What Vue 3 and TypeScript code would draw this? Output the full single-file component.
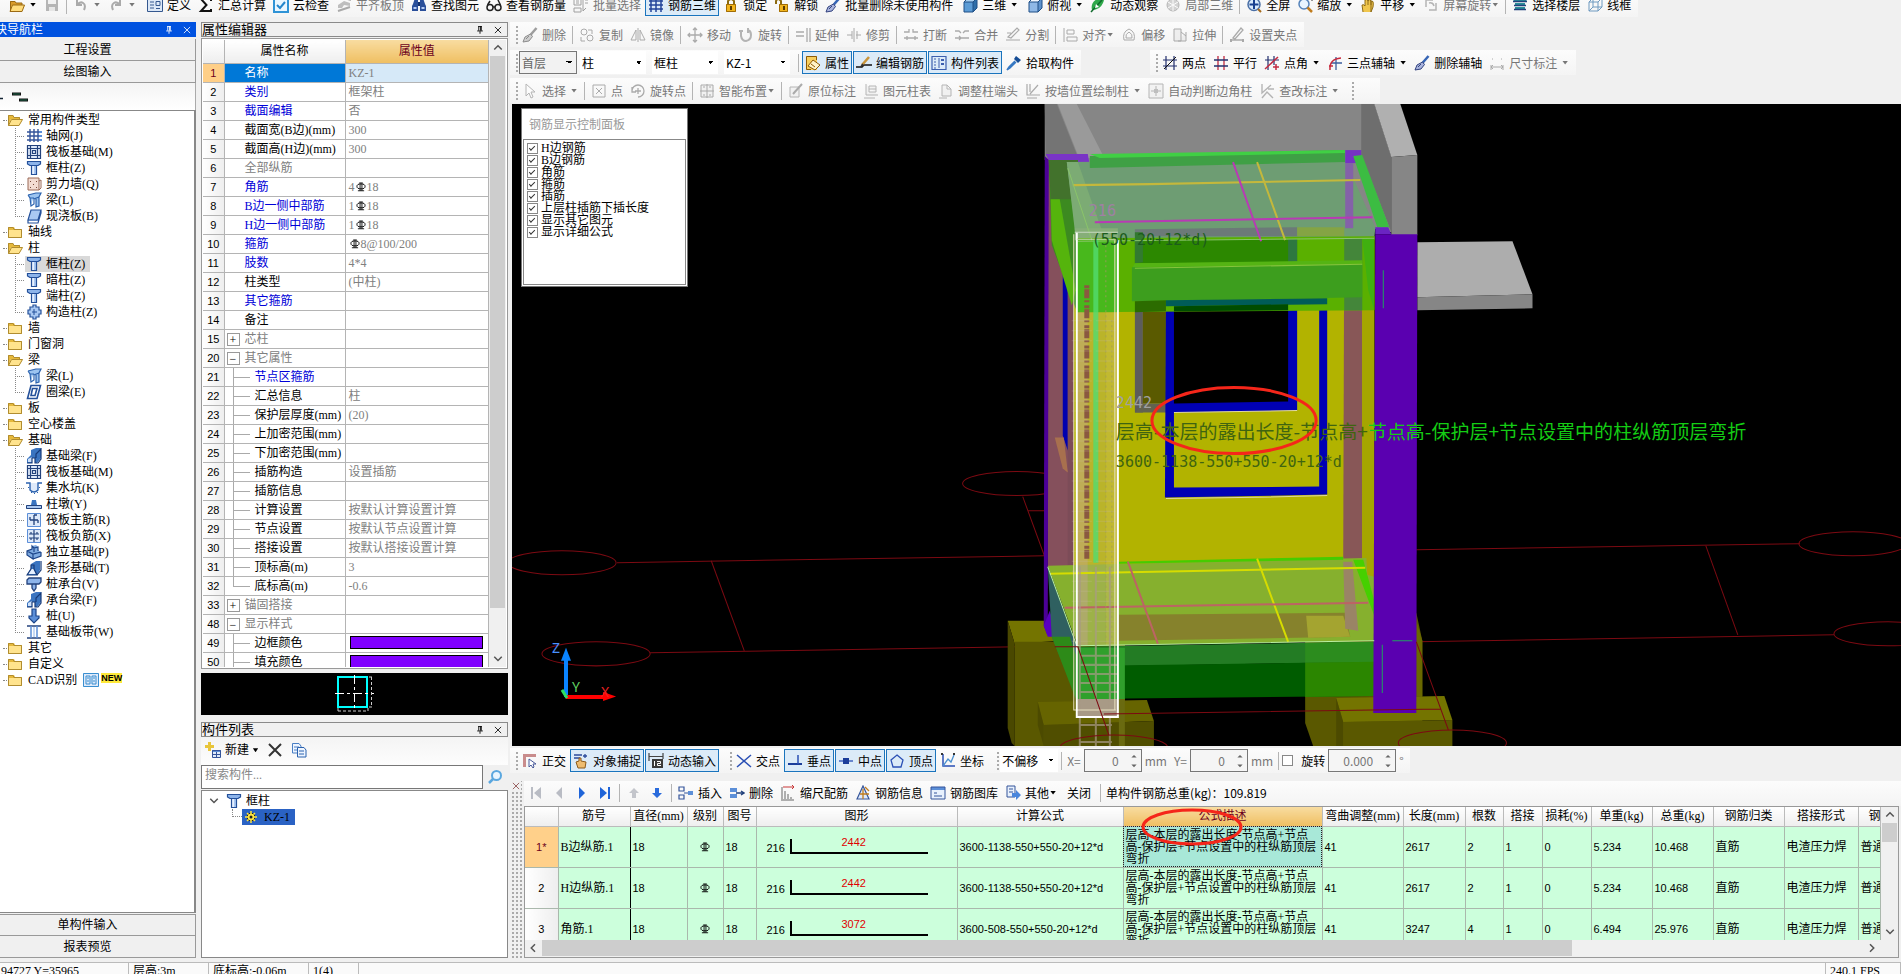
<script setup lang="ts">
import { h, ref, type FunctionalComponent, type VNode } from 'vue'

/* ---------- icons (16 x 16) ---------- */
const p = (d: string, stroke = '#2f5fa8', w = 1, fill = 'none') =>
  `<path d="${d}" stroke="${stroke}" stroke-width="${w}" fill="${fill}"/>`
const f = (d: string, fill: string) => `<path d="${d}" fill="${fill}"/>`
const brush = (c: string) =>
  p('M14.5 1L8 8.5', c, 2.5) + f('M8.5 7L3 10L1 15L7 14L10.5 9.5Z', '#a9b4dd') + p('M8.5 7L3 10L1 15L7 14L10.5 9.5ZM4 12L7 9', '#33437f')
const cube = (a: string, b: string, c: string) =>
  f('M2 5H11V15H2Z', a) + f('M2 5L6 1H15L11 5Z', b) + f('M11 5L15 1V11L11 15Z', c) + p('M2 5H11V15H2ZM2 5L6 1H15L11 5M15 1V11L11 15', '#1f4f86')
const icons: Record<string, string> = {
  open: f('M1 4H6L7 6H13V14H1Z', '#d99b2b') + f('M3 8H16L13 15H1Z', '#ffdc7d') + p('M1.5 14V4.5H6L7 6H13V8M3.5 8H15.5L13 14.5H1Z', '#9b6a14'),
  save: f('M2 2H14V14H2Z', '#8a8a8a') + f('M4 2H12V7H4Z', '#eee') + f('M5 10H11V14H5Z', '#ddd'),
  undo: p('M4 3V8H9M4 8C8 3 14 6 11 13', '#777', 2),
  redo: p('M12 3V8H7M12 8C8 3 2 6 5 13', '#777', 2),
  define: f('M1 2H15V14H1Z', '#dce8f7') + p('M.5 1.5H15.5V14.5H.5ZM3 5H7M3 8H7M3 11H7M9 4.500H13V8.500H9ZM9 11.500H13', '#35588f'),
  sigma: p('M13 4V2H3L8.500 8L3 14H13V12', '#111', 2),
  cloud: f('M0 0H16V16H0Z', '#2f93d6') + f('M2 2H14V14H2Z', '#e9f6ff') + p('M4 8L7 11L12 5', '#2486cc', 2),
  flush: f('M2 8L8 4L14 6V9L8 8L6 11H2Z', '#999') + p('M2 14L14 10M8 1L15 3', '#777', 2),
  find: f('M2 7L4 1H7V14H1V9ZM14 7L12 1H9V14H15V9Z', '#2a4f9a') + f('M7 5H9V9H7Z', '#14306b') + p('M2.500 11H5.500M10.500 11H13.500', '#b7cdf5', 2),
  glasses: `<circle cx="4" cy="10.500" r="3" fill="none" stroke="#222" stroke-width="1.500"/><circle cx="12" cy="10.500" r="3" fill="none" stroke="#222" stroke-width="1.500"/>` + p('M7 10H9M14.500 8L12 3M1.500 8L4 4', '#222', 1.5),
  batch: p('M1 2H8V8H1ZM3 4H6M3 6H6M1 11H8V15H1ZM10 2V14M10 14L13 11M12 3H15M12 6H15', '#666'),
  bar3d: p('M3 1V15M8 1V15M13 1V15M1 4H15M1 8H15M1 12H15', '#24469a', 1.5),
  lock: p('M5 8V4Q8 0 11 4V8', '#8b6a10', 2) + f('M3 7H13V15H3Z', '#f2b51d') + p('M3.500 7.500H12.500V14.500H3.500Z', '#a06c06') + f('M7 9H9V13H7Z', '#5b3b00'),
  unlock: p('M2 7V4Q4 0 7 4V8', '#8b6a10', 2) + f('M5 7H14V15H5Z', '#f2b51d') + p('M5.500 7.500H13.500V14.500H5.500Z', '#a06c06') + f('M9 9H11V13H9Z', '#5b3b00'),
  brush: brush('#3665b5'),
  cube: cube('#5b9bd5', '#a9d0f0', '#2f6ea8'),
  cube2: cube('#8fb8e6', '#f2f8ff', '#5e92cc'),
  orbit: f('M2 13Q0 5 9 1Q16 0 13 6Q10 13 2 13Z', '#2fa84a') + p('M1 15L12 3', '#0f6a2c', 1.5) + f('M6 7L9 10L5 11Z', '#fff'),
  local: `<circle cx="8" cy="8" r="6" fill="#bbb" stroke="#888"/>` + p('M3 5L13 11M3 11L13 5M8 2V14', '#fff'),
  full: `<circle cx="8" cy="7.500" r="6" fill="#d8eafc" stroke="#4a6fa5" stroke-width="1.500"/>` + p('M8 3V12M3.500 7.500H12.500', '#173f8f', 2) + p('M12 12L15 15', '#a56a1c', 2),
  zoom: `<circle cx="7" cy="7" r="5" fill="#e8f4ff" stroke="#5583ba" stroke-width="1.500"/>` + p('M10.500 10.500L15 15', '#c07c1e', 2.5) + p('M12 1H15V4', '#333'),
  pan: f('M3 15L2 8Q4 7 5 9L5 3Q7 1 8 4L9 2Q11 1 11 4L13 4Q14 6 13 10L11 15Z', '#f0c64d') + p('M3 15L2 8Q4 7 5 9L5 3Q7 1 8 4V8M8 4Q10 1 11 4V8M11 4Q14 3 13 10L11 15Z', '#8d6a18'),
  rot: p('M3 3H10M3 3V10M13 6V13H6M6 6Q10 5 11 9', '#888', 1.5),
  floors: f('M3 2L13 2L15 4H1ZM3 6H13V8H3ZM3 10H13V12H3Z', '#2a8f9a') + p('M1 4.500H15M2 8.500H14M2 12.500H14M3 1.500H13', '#23427c', 1.5),
  wire: p('M2 5H11V14H2ZM2 5L6 1H15V10L11 14M11 5L15 1M6 1V10H15M6 10L2 14', '#6f9ac0'),
  copy: `<circle cx="5" cy="5" r="3" fill="none" stroke="#777"/><circle cx="11" cy="11" r="3" fill="none" stroke="#777"/>` + p('M9 3H13V7M2 10V14H6', '#777'),
  mirror: p('M8 1V15M6 3V13H1ZM10 3V13H15Z', '#777'),
  move: p('M8 1V15M1 8H15M6 3L8 1L10 3M6 13L8 15L10 13M3 6L1 8L3 10M13 6L15 8L13 10', '#777', 1.3),
  rotate: p('M3 4V9Q4 14 8 14Q13 13 13 8Q13 4 10 3M10 1V6M1 4H5', '#888', 2),
  extend: p('M1 5H9M1 9H9M12 1V15M15 1V15', '#777', 1.3),
  trim: p('M1 8H6M10 8H15M8 1V15M6 4V12M11 4V12', '#777'),
  brk: p('M1 5H6V2M10 2V5H15M1 11H15M4 9V13M12 9V13', '#777', 1.3),
  merge: p('M1 4H5L7 6M15 4H11L9 6M1 11H15M5 9L7 11L5 13', '#777', 1.3),
  split: p('M1 13H15M3 10L12 1L14 3L6 11ZM2 6H6', '#777', 1.2),
  align: p('M2 1V15M5 3H12V7H5ZM5 10H15V14H5Z', '#777'),
  offset: p('M3 13Q1 5 8 2Q15 5 13 13ZM5 11Q4 7 8 5Q12 7 11 11Z', '#777'),
  stretch: p('M2 2H9V14H2ZM9 5L14 9M14 5V14H6', '#777', 1, '#e8e8e8'),
  grips: p('M1 13H15M4 11L12 1L14 3L6 12Z', '#777', 1.3) + f('M1 12H3V15H1ZM13 12H15V15H13Z', '#777'),
  prop: f('M1 1H12V15H1Z', '#f8cf5e') + f('M8 5L15 10L10 15L3 11Z', '#fff3c8') + p('M1.500 1.500H11.500V5M1.500 1.500V14.500H6M8 5L15 10L10 15L3 11ZM6 9L10 12', '#8c5a08'),
  edit: p('M0 12H6L8 10H16', '#111', 1.5) + p('M6 10L13 2', '#c9953b', 2.5) + p('M5 12L7 9', '#333', 2),
  list: p('M1 1.500H15V14.500H1Z', '#3c5fae', 1.2) + p('M3 4H5M3 7H5M3 10H5M3 13H5M8 3V13', '#3c5fae', 1, 'none') + f('M10 4H13V6H10ZM10 8H13V10H10Z', '#3c5fae'),
  dropper: f('M10 1L15 5L12 8L8 4Z', '#174e96') + p('M9 6L3 12L1 15L4 13L10 7', '#3678c2', 1.5),
  twopt: p('M4 1V15M1 5H15M12 1V15M1 11H15', '#23306e', 1.2) + p('M2 14L14 2', '#111'),
  parallel: p('M5 1V15M11 1V15', '#c22b42', 1.3) + p('M1 5H15M1 11H15', '#23306e', 1.3),
  ptangle: p('M4 1V15M1 5H15M10 1V10', '#23306e', 1.2) + p('M1 14L14 2M9 12H15M12 9V15', '#c22b42', 1.5),
  three: p('M9 2V15M4 8H15', '#3d5d9d', 1.3) + p('M3 15Q2 4 14 3M2 11H6', '#c8283c', 1.5),
  dim: p('M2 10V15M14 10V15M2 12H14M4 10L2 12L4 14M12 10L14 12L12 14M3 4H4M12 4H13', '#777'),
  arrow: p('M4 1V13L7 10L9 15L11 14L9 9H13Z', '#888', 1, '#fff'),
  point: p('M2 2H14V14H2ZM5 5L11 11M11 5L5 11', '#777'),
  rotpt: p('M2 8A6 6 0 1 1 8 14M2 4V9H6M8 5V11M5 8H11', '#777', 1.3),
  smart: p('M2 2H14V14H2ZM8 1V15M1 8H15M4 4H6M10 4H12M4 12H6M10 12H12', '#777', 1, '#eee'),
  note: p('M2 4H11V14H2Z', '#888', 1, '#eee') + p('M5 11L14 1', '#777', 2),
  ctable: p('M3 1V12H15M6 3H13V9H6ZM6 6H13M1 15H12', '#888', 1, '#eee'),
  adjust: p('M4 2H9L13 6V13H4ZM9 2V6H13M1 15H9', '#888', 1, '#eee'),
  wall: p('M2 1V12H15M5 11L13 2M2 15H12M5 1V9', '#777', 1.2),
  auto: p('M1 1H15V15H1ZM8 3V13M3 8H13', '#888', 1, '#eee') + f('M6 6H10V10H6Z', '#999'),
  modify: p('M3 1V10L12 2M3 15L8 9L14 15M9 6H15', '#888', 1.4),
  ortho: f('M1 1H14V4H4V14H1Z', '#c98c8c') + p('M7 6V14L9 12L11 15L12 14L11 11H14Z', '#4a5a9a', 1, '#fff'),
  snap: p('M1 2H9M1 5H7M12 1V5M10 3H14', '#2c4b9a', 1.3) + f('M5 15L3 9L6 8V5H8V8L13 9L12 15Z', '#eebc70') + p('M5 15L3 9L6 8V5H8V8L13 9L12 15Z', '#8c5a1a'),
  dyn: p('M1 0V8M1 3.500H15M15 0V6', '#444', 1.2) + f('M4 6H15V15H4Z', '#3a3a3a') + p('M6.500 8V13M9 8.500H12.500V10.500H9.500V12.500H13', '#fff'),
  cross: p('M1 2L15 14M15 2L1 14', '#2b50b5', 1.5),
  perp: p('M1 11H15', '#1b3d9a', 2) + p('M11 2V11', '#2b50b5', 1.5),
  mid: p('M1 8H15', '#2b50b5', 1.3) + f('M5 5H11V11H5Z', '#1b3d9a'),
  vertex: p('M8 2L14 7L12 14H4L2 7Z', '#2b50b5', 1.3),
  coord: p('M3 1V13H15', '#2b50b5', 1.5) + p('M3 13L8 6L11 9L14 2', '#4a8fd0', 1.3) + f('M1 0H3V2H1ZM13 0H15V2H13Z', '#333'),
  first: f('M3 2H5V14H3ZM13 2V14L6 8Z', '#b9bcc4'),
  prev: f('M11 2V14L5 8Z', '#b9bcc4'),
  next: f('M5 2V14L11 8Z', '#1f64d8'),
  last: f('M11 2H13V14H11ZM3 2V14L10 8Z', '#1f64d8'),
  up: f('M8 3L13 8H10V13H6V8H3Z', '#c3c5cb'),
  down: f('M8 13L13 8H10V3H6V8H3Z', '#2a6bdc'),
  insert: p('M1 2H6V6H1ZM1 10H6V14H1ZM6 8H10', '#34549a', 1.2) + f('M10 6H15V10H10Z', '#5c8fd8'),
  delrow: f('M1 3H8V7H1ZM1 9H8V13H1Z', '#5c8fd8') + p('M7 8H15M12 6L15 8L12 10', '#23427c', 1.4),
  scale: p('M2 2V14M5 6V14M8 9V14M11 12V14M1 15H14', '#666') + p('M3 2H14M12 0L14 2L12 4', '#c83737'),
  info: p('M2 14L8 1L14 14Z', '#34549a', 1.2, '#dfeafa') + p('M5 9H14M8 4V14M10 2L14 6', '#c07c1e', 1.3),
  lib: f('M1 2H15V14H1Z', '#e8f1fd') + f('M1 2H15V5H1Z', '#5c8fd8') + p('M1 2H15V14H1ZM4 8H7M4 11H12', '#34549a'),
  other: p('M2 1H10V12H2ZM4 4H8M4 7H8', '#34549a', 1, '#e8f1fd') + f('M7 8H11V5L16 10L11 15V12H7Z', '#4a86dc'),
  folder: f('M1 3H7L8 5H15V14H1Z', '#e6b93c') + f('M2 6H15V13H2Z', '#ffe38d') + p('M1.500 13.500V3.500H6L7 5.500H14.500V13.500Z', '#b08c30'),
  folderOpen: f('M1 3H6L7 5H13V13H1Z', '#e6b93c') + f('M4 7H16L12 14H1Z', '#ffe38d') + p('M1.500 13.500V3.500H6L7 5.500H12.500V7M4.500 7.500H15.500L12 13.500H1.500Z', '#b08c30'),
  axis: p('M4 1V14M8 1V14M12 1V14M1 4H14M1 8H14M1 12H14', '#34549a', 1.4) + f('M13 3H16V5H13ZM13 7H16V9H13ZM13 11H16V13H13Z', '#5c8fd8'),
  raft: f('M1 1H15V15H1Z', '#dfeafa') + p('M1.500 1.500H14.500V14.500H1.500ZM4.500 1V15M11.500 1V15M1 4.500H15M1 11.500H15M6.500 6.500H9.500V9.500H6.500Z', '#23427c', 1.2),
  column: f('M1 1H15V4L12 6H4L1 4Z', '#8db4ea') + f('M5 6H11V15H5Z', '#e6f0ff') + f('M8 6H11V15H8Z', '#a9c8f2') + p('M1.500 1.500H14.500V4L12 5.500H4L1.500 4ZM5.500 6V14.500H10.500V6', '#24509a', 1.2),
  shear: f('M2 2H13V14H2Z', '#f3dcd2') + p('M2 2H13V14H2ZM13 5L15 4V12L13 14', '#9a6a58') + f('M4 5H5V6H4ZM7 8H8V9H7ZM10 5H11V6H10ZM4 11H5V12H4ZM10 11H11V12H10Z', '#7a4a3a'),
  beam: f('M2 3L10 1H15L13 5V14L10 15V7H7L5 13L4 6Z', '#9cc4f0') + p('M2 3L10 1H15L13 5V14L10 15V7M2 3L4 6L5 14L8 12V7L13 5M4 6L8 6', '#2b62ae', 1.2),
  slab: f('M5 2H15L12 13H2Z', '#a9c8f2') + p('M5 2H15L12 12H2ZM2 12V15H12L15 5V2', '#24509a', 1.2),
  scol: f('M4 3H7V1H10V3H13V6H15V10H13V13H10V15H7V13H4V10H2V6H4Z', '#a9c8f2') + p('M4 3H7V1H10V3H13V6H15V10H13V13H10V15H7V13H4V10H2V6H4Z', '#24509a', 1.2) + p('M8 5V11M6 8H11', '#24509a'),
  ring: p('M5 1.500H14.500L11 14.500H1.500ZM6.500 4.500H11L9 11.500H5Z', '#24509a', 1.6),
  fbeam: f('M1 15V11L5 7V2L10 0H15V10L11 15H9V10H6V15Z', '#3a74c0') + f('M2 14V11L6 9V14Z', '#cfe2fb') + p('M1 15H6V10H9V15H12L15 11V1L10 6V10', '#173a78', 1.2),
  pit: p('M0 3H4V10Q8 14 12 10V3H16', '#2b62ae', 1.4, '#dfeafa') + f('M5 12H6V13H5ZM8 13H9V14H8ZM11 12H12V13H11ZM2 7H3V8H2ZM13 7H14V8H13Z', '#2b62ae'),
  pier: f('M5 9L6 4H10L11 9Z', '#3a74c0') + f('M0 9H16V13H0Z', '#a9c8f2') + p('M.5 9.500H15.500V12.500H.5Z', '#23427c'),
  mbar: f('M1 1H15V15H1Z', '#dfeafa') + p('M1.500 1.500H14.500V14.500H1.500Z', '#5c8fd8') + p('M8 3V13M4 8H12M4 5V8M12 8V11M8 3H11', '#23427c', 1.3),
  nbar: f('M1 1H15V15H1Z', '#dfeafa') + p('M1.500 1.500H14.500V14.500H1.500Z', '#5c8fd8') + p('M8 2V14M3 6H13M3 10H13M5 4V6M11 4V6M5 10V12M11 10V12', '#23427c', 1.2),
  iso: f('M1 7L6 5V2L10 1L12 3V6L15 8V12L7 15L1 11Z', '#7fabe0') + p('M1 7L7 10L15 8M7 10V15L1 11V7L6 5V2L8 4L12 3V7M15 8V12L7 15M8 4V8', '#1d4589', 1.2),
  strip: f('M1 15L5 8V4L10 1H14V10L11 15Z', '#3a74c0') + f('M2 14L5 9H8L10 14Z', '#e6f0ff') + p('M1 15H11L8 9V5H5V9ZM11 15L15 10V1', '#173a78', 1.2),
  cap: f('M1 3H15V8H1Z', '#cfe2fb') + p('M1 4L3 2H15V6L13 8H1ZM6 8V12L8 15L10 12V8', '#23427c', 1.3, '#8db4ea'),
  pile: f('M6 1H10V8H13V10L8 15L3 10V8H6Z', '#5c8fd8') + p('M6 1H10V8H13V10L8 15L3 10V8H6Z', '#1d4589', 1.2),
  band: p('M1 2H15M1 14H15', '#23427c', 1.4) + p('M5 2V14M11 2V14', '#5c8fd8', 1.5) + p('M8 3V13', '#8db4ea'),
  cad: f('M0 1H16V15H0Z', '#dfeafa') + p('M.5 1.500H15.500V14.500H.5ZM3 4H7V12H3ZM9 4H13V12H9ZM4 6H6M4 9H6M10 6H12M10 9H12', '#3a8fd0'),
  newItem: f('M3 0H6V3H9V6H6V9H3V6H0V3H3Z', '#e8c53a') + f('M7 8H16V16H7Z', '#dfeafa') + f('M7 8H16V10H7Z', '#5c8fd8') + p('M7.500 8.500H15.500V15.500H7.500ZM8 12.500H15M11.500 10V15', '#34549a'),
  del: p('M2 2L14 14M14 2L2 14', '#333', 2),
  copyDoc: p('M1.500 1.500H8L10 4V11H1.500ZM3 5H8M3 8H8', '#4a7fc4', 1, '#eef5ff') + p('M6.500 5.500H13L15 8V15H6.500ZM8 9H13M8 12H13', '#2b62ae', 1, '#eef5ff'),
  search: `<circle cx="9.500" cy="6.500" r="4.500" fill="#e8f5ff" stroke="#5aa7df" stroke-width="2"/>` + p('M6 10L2 14', '#5aa7df', 2.5),
  gear: `<circle cx="8" cy="8" r="4" fill="#ffe640" stroke="#222"/><circle cx="8" cy="8" r="1.500" fill="#222"/>` + p('M8 2V5M8 11V14M2 8H5M11 8H14M4 4L5.500 5.500M10.500 10.500L12 12M12 4L10.500 5.500M4 12L5.500 10.500', '#ffe640', 1.5),
  pin: p('M5 2.500H11M6 2V9M10 2V9M9 2V9M3.500 9.500H12.500M8 10V14', 'currentColor', 1.4),
  close: p('M3 3L13 13M13 3L3 13', 'currentColor', 1.3),
  expandAll: f('M0 9H4V11H0Z', '#123'),
  collapseAll: p('M0 5H9M7 11H16', '#111', 3) + p('M1 5H8M8 11H15', '#1d6b4c', 1),
  up2: p('M3 10L8 5L13 10', '#555', 2),
  down2: p('M3 5L8 10L13 5', '#555', 2),
  left2: p('M10 3L5 8L10 13', '#555', 2),
  right2: p('M6 3L11 8L6 13', '#555', 2),
  rebar: `<ellipse cx="8" cy="7" rx="6.500" ry="4" fill="none" stroke="#000" stroke-width="1.500"/>` + p('M6.500 0V14M9.500 0V14M3 14H13', '#000', 1.4),
  spin: f('M5 4L8 1L11 4ZM5 12L8 15L11 12Z', '#666'),
}
const Icon: FunctionalComponent<{ n: string }> = (props) =>
  h('svg', { class: 'ic', viewBox: '0 0 16 16', 'aria-hidden': 'true', innerHTML: icons[props.n] })
Icon.props = ['n']

/* ---------- toolbars ---------- */
interface Item {
  k?: 'btn' | 'sep' | 'grip' | 'combo' | 'label' | 'spin' | 'check' | 'gap'
  i?: string
  t?: string
  drop?: 'far' | 'near'
  off?: boolean
  on?: boolean
  w?: number
}
const b = (i: string, t = '', x: Partial<Item> = {}): Item => ({ i, t, ...x })
const d = (i: string, t = '', x: Partial<Item> = {}): Item => ({ i, t, off: true, ...x })
const sep: Item = { k: 'sep' }
const grip: Item = { k: 'grip' }
const gap = (w: number): Item => ({ k: 'gap', w })

const drawItem = (it: Item): VNode => {
  const w = it.w ? { width: it.w + 'px' } : undefined
  switch (it.k) {
    case 'sep': return h('span', { class: 'sep' })
    case 'grip': return h('span', { class: 'grip' })
    case 'gap': return h('span', { style: w })
    case 'label': return h('span', { class: ['lbl', { off: it.off }] }, it.t)
    case 'combo': return h('select', { class: ['combo', { boxed: it.off }], disabled: it.off, style: w, 'aria-label': it.t }, [h('option', it.t)])
    case 'check': return h('label', { class: 'tick' }, [h('input', { type: 'checkbox' }), it.t])
    case 'spin': return h('span', { class: 'spin', style: w }, [h('input', { value: it.t, 'aria-label': it.i, disabled: true }), h(Icon, { n: 'spin' })])
  }
  return h('button', { type: 'button', class: ['btn', { off: it.off, on: it.on }], 'aria-label': it.t || it.i }, [
    it.i ? h(Icon, { n: it.i }) : null,
    it.t ? h('span', it.t) : null,
    it.drop ? h('i', { class: ['caret', it.drop] }) : null,
  ])
}
const Bar: FunctionalComponent<{ items: Item[] }> = (props) => h('div', { class: 'bar', role: 'toolbar' }, props.items.map(drawItem))
Bar.props = ['items']

const mainBar: Item[] = [
  b('open', '', { drop: 'far' }), d('save'), sep, d('undo', '', { drop: 'far' }), d('redo', '', { drop: 'far' }), gap(3),
  b('define', '定义'), b('sigma', '汇总计算'), b('cloud', '云检查'), d('flush', '平齐板顶'), b('find', '查找图元'), b('glasses', '查看钢筋量'),
  d('batch', '批量选择'), b('bar3d', '钢筋三维', { on: true }), b('lock', '锁定'), b('unlock', '解锁'), b('brush', '批量删除未使用构件'), gap(1),
  b('cube', '三维', { drop: 'far' }), gap(1), b('cube2', '俯视', { drop: 'far' }), b('orbit', '动态观察'), d('local', '局部三维'), sep,
  b('full', '全屏'), b('zoom', '缩放', { drop: 'far' }), b('pan', '平移', { drop: 'far' }), d('rot', '屏幕旋转', { drop: 'near' }), sep,
  b('floors', '选择楼层'), b('wire', '线框'),
]
const editBar: Item[] = [
  grip, d('brush', '删除'), sep, d('copy', '复制'), d('mirror', '镜像'), sep, d('move', '移动'), d('rotate', '旋转'), sep,
  d('extend', '延伸'), d('trim', '修剪'), sep, d('brk', '打断'), d('merge', '合并'), d('split', '分割'), sep,
  d('align', '对齐', { drop: 'near' }), d('offset', '偏移'), d('stretch', '拉伸'), sep, d('grips', '设置夹点'),
]
const partBar: Item[] = [
  grip, { k: 'combo', t: '首层', off: true, w: 58 }, gap(1), { k: 'combo', t: '柱', w: 66 }, gap(4), { k: 'combo', t: '框柱', w: 66 }, gap(4),
  { k: 'combo', t: 'KZ-1', w: 66 }, gap(4), sep, b('prop', '属性', { on: true }), b('edit', '编辑钢筋', { on: true }),
  b('list', '构件列表', { on: true }), b('dropper', '拾取构件'),
]
const axisBar: Item[] = [
  grip, b('twopt', '两点'), b('parallel', '平行'), b('ptangle', '点角', { drop: 'far' }), b('three', '三点辅轴', { drop: 'far' }),
  b('brush', '删除辅轴'), d('dim', '尺寸标注', { drop: 'far' }),
]
const drawBar: Item[] = [
  grip, d('arrow', '选择', { drop: 'far' }), sep, d('point', '点'), d('rotpt', '旋转点'), sep, d('smart', '智能布置', { drop: 'near' }), sep,
  d('note', '原位标注'), d('ctable', '图元柱表'), d('adjust', '调整柱端头'), d('wall', '按墙位置绘制柱', { drop: 'far' }),
  d('auto', '自动判断边角柱'), d('modify', '查改标注', { drop: 'far' }),
]
const snapBars: Item[][] = [
  [grip, b('ortho', '正交'), b('snap', '对象捕捉', { on: true }), b('dyn', '动态输入', { on: true }), gap(1)],
  [grip, b('cross', '交点'), b('perp', '垂点', { on: true }), b('mid', '中点', { on: true }), b('vertex', '顶点', { on: true }), b('coord', '坐标')],
  [grip, { k: 'combo', t: '不偏移', w: 58 }, sep, { k: 'label', t: 'X=', off: true }, { k: 'spin', i: 'X', t: '0', w: 58 }, { k: 'label', t: 'mm', off: true }, gap(1),
    { k: 'label', t: 'Y=', off: true }, { k: 'spin', i: 'Y', t: '0', w: 58 }, { k: 'label', t: 'mm', off: true }, sep, { k: 'check', t: '旋转' }, gap(1),
    { k: 'spin', i: '角度', t: '0.000', w: 68 }, { k: 'label', t: '°', off: true }],
]
const rebarBar: Item[] = [
  b('first'), b('prev'), b('next'), b('last'), sep, b('up'), b('down'), sep, b('insert', '插入'), b('delrow', '删除'), b('scale', '缩尺配筋'),
  b('info', '钢筋信息'), b('lib', '钢筋图库'), b('other', '其他', { drop: 'near' }), gap(2), b('', '关闭'), gap(2), sep, { k: 'label', t: '单构件钢筋总重(kg)：109.819' },
]

/* ---------- navigation tree ---------- */
interface Node { t: string; i: string; lv: number; end?: boolean; sel?: boolean }
const group = (t: string, kids: [string, string][] = []): Node[] => [
  { t, i: kids.length ? 'folderOpen' : 'folder', lv: 0 },
  ...kids.map(([kt, ki], n) => ({ t: kt, i: ki, lv: 1, end: n === kids.length - 1, sel: t === '柱' && n === 0 })),
]
const tree: Node[] = [
  ...group('常用构件类型', [['轴网(J)', 'axis'], ['筏板基础(M)', 'raft'], ['框柱(Z)', 'column'], ['剪力墙(Q)', 'shear'], ['梁(L)', 'beam'], ['现浇板(B)', 'slab']]),
  ...group('轴线'),
  ...group('柱', [['框柱(Z)', 'column'], ['暗柱(Z)', 'column'], ['端柱(Z)', 'column'], ['构造柱(Z)', 'scol']]),
  ...group('墙'), ...group('门窗洞'),
  ...group('梁', [['梁(L)', 'beam'], ['圈梁(E)', 'ring']]),
  ...group('板'), ...group('空心楼盖'),
  ...group('基础', [['基础梁(F)', 'fbeam'], ['筏板基础(M)', 'raft'], ['集水坑(K)', 'pit'], ['柱墩(Y)', 'pier'], ['筏板主筋(R)', 'mbar'], ['筏板负筋(X)', 'nbar'],
    ['独立基础(P)', 'iso'], ['条形基础(T)', 'strip'], ['桩承台(V)', 'cap'], ['承台梁(F)', 'fbeam'], ['桩(U)', 'pile'], ['基础板带(W)', 'band']]),
  ...group('其它'), ...group('自定义'), ...group('CAD识别'),
]

/* ---------- property grid; '#' stands for the rebar grade mark ---------- */
interface Prop { n: number; t: string; v?: string; c?: 'blue' | 'gray'; box?: '+' | '-'; kid?: boolean; end?: boolean; swatch?: boolean }
const props: Prop[] = [
  { n: 1, t: '名称', v: 'KZ-1' }, { n: 2, t: '类别', v: '框架柱', c: 'blue' }, { n: 3, t: '截面编辑', v: '否', c: 'blue' },
  { n: 4, t: '截面宽(B边)(mm)', v: '300' }, { n: 5, t: '截面高(H边)(mm)', v: '300' }, { n: 6, t: '全部纵筋', c: 'gray' },
  { n: 7, t: '角筋', v: '4#18', c: 'blue' }, { n: 8, t: 'B边一侧中部筋', v: '1#18', c: 'blue' }, { n: 9, t: 'H边一侧中部筋', v: '1#18', c: 'blue' },
  { n: 10, t: '箍筋', v: '#8@100/200', c: 'blue' }, { n: 11, t: '肢数', v: '4*4', c: 'blue' }, { n: 12, t: '柱类型', v: '(中柱)' },
  { n: 13, t: '其它箍筋', c: 'blue' }, { n: 14, t: '备注' }, { n: 15, t: '芯柱', c: 'gray', box: '+' }, { n: 20, t: '其它属性', c: 'gray', box: '-' },
  { n: 21, t: '节点区箍筋', c: 'blue', kid: true }, { n: 22, t: '汇总信息', v: '柱', kid: true }, { n: 23, t: '保护层厚度(mm)', v: '(20)', kid: true },
  { n: 24, t: '上加密范围(mm)', kid: true }, { n: 25, t: '下加密范围(mm)', kid: true }, { n: 26, t: '插筋构造', v: '设置插筋', kid: true },
  { n: 27, t: '插筋信息', kid: true }, { n: 28, t: '计算设置', v: '按默认计算设置计算', kid: true }, { n: 29, t: '节点设置', v: '按默认节点设置计算', kid: true },
  { n: 30, t: '搭接设置', v: '按默认搭接设置计算', kid: true }, { n: 31, t: '顶标高(m)', v: '3', kid: true }, { n: 32, t: '底标高(m)', v: '-0.6', kid: true, end: true },
  { n: 33, t: '锚固搭接', c: 'gray', box: '+' }, { n: 48, t: '显示样式', c: 'gray', box: '-' },
  { n: 49, t: '边框颜色', kid: true, swatch: true }, { n: 50, t: '填充颜色', kid: true, swatch: true },
]

/* ---------- rebar table ---------- */
const heads = ['', '筋号', '直径(mm)', '级别', '图号', '图形', '计算公式', '公式描述', '弯曲调整(mm)', '长度(mm)', '根数', '搭接', '损耗(%)', '单重(kg)', '总重(kg)', '钢筋归类', '搭接形式', '钢筋类型']
const desc = '层高-本层的露出长度-节点高+节点\n高-保护层+节点设置中的柱纵筋顶层\n弯折'
const bars = [
  { n: '1*', name: 'B边纵筋.1', len: '2442', fx: '3600-1138-550+550-20+12*d', rest: ['41', '2617', '2', '1', '0', '5.234', '10.468'] },
  { n: '2', name: 'H边纵筋.1', len: '2442', fx: '3600-1138-550+550-20+12*d', rest: ['41', '2617', '2', '1', '0', '5.234', '10.468'] },
  { n: '3', name: '角筋.1', len: '3072', fx: '3600-508-550+550-20+12*d', rest: ['41', '3247', '4', '1', '0', '6.494', '25.976'] },
]

const shows = ref(['H边钢筋', 'B边钢筋', '角筋', '箍筋', '插筋', '上层柱插筋下插长度', '显示其它图元', '显示详细公式'].map((t) => ({ t, on: true })))

/* ---------- 3D view: [points, fill, opacity?] ---------- */
type Poly = [string, string, number?]
const ellipses = [[563, 562], [597, 653], [1017, 483], [1852, 543], [1887, 633]]
const axes = ['M618 562L1045 555', 'M712 560L745 650', 'M651 652L1078 645', 'M1023 496L1045 556M1028 510H1046', 'M1416 549L1799 543', 'M1705 545L1737 634', 'M1416 641L1833 634']
const polys: Poly[] = [
  ['1008,620 1050,620 1060,640 1015,643', '#747400'],
  ['1008,620 1015,643 1015,745 1012,742 1008,727', '#4a4800'],
  ['1015,641 1125,641 1125,745 1015,745', '#5a5800'],
  ['1038,701 1147,699 1154,720 1044,724', '#666400'],
  ['1038,701 1044,724 1044,745 1038,724', '#4c4a00'],
  ['1044,724 1154,720 1154,745 1044,745', '#504e00'],
  ['1125,641 1125,745 1119,745 1119,641', '#6a6a10'],
  ['1305,615 1416,612 1422,640 1422,745 1313,745 1305,722', '#5a5800'],
  ['1336,697 1444,695 1452,719 1343,721', '#747400'],
  ['1336,697 1343,721 1343,745 1336,745', '#4c4a00'],
  ['1343,721 1452,719 1452,745 1343,745', '#5a5800'],
  ['1422,640 1422,695 1416,695 1416,620', '#6a6800'],
  ['1045,104 1374,104 1391,157 1391,232 1045,160', '#868686'],
  ['1045,104 1057,104 1080,162 1046,156', '#747474'],
  ['1058,104 1077,104 1103,155 1080,160', '#9a9a9a'],
  ['1361,104 1374,104 1391,157 1391,232 1361,155', '#6e6e6e'],
  ['1374,104 1400,104 1417,155 1391,157', '#b0b0b0'],
  ['1391,157 1417,155 1417,235 1391,235', '#868686'],
  ['1417,242 1512,241 1532,294 1417,297', '#adadad'],
  ['1417,297 1532,294 1532,308 1417,310', '#868686'],
  ['1048,156 1077,156 1077,566 1048,566', '#85505c'],
  ['1063,262 1068,270 1068,450 1063,435', '#0000ae'],
  ['1068,270 1077,290 1077,566 1068,566', '#7c4c58'],
  ['1055,437 1064,437 1068,472 1063,468', '#a8704e'],
  ['1045,156 1049,160 1048,635 1044,625', '#4b0096'],
  ['1074,236 1374,236 1374,575 1074,575', '#b2b300'],
  ['1344,236 1362,236 1362,562 1343,562', '#885757'],
  ['1362,236 1374,236 1374,575 1362,562', '#a5a600'],
  ['1135,236 1143,236 1143,412 1135,412', '#5c5c5c'],
  ['1143,236 1166,236 1166,403 1143,403', '#5a5a00'],
  ['1143,403 1166,403 1166,412 1135,412', '#626250'],
  ['1166,298 1327,298 1327,494 1165,497', '#0000b4'],
  ['1174,310 1288,310 1288,401 1174,403', '#000'],
  ['1297,304 1319,304 1319,486 1174,487 1174,412 1297,410', '#b2b300'],
  ['1046,154 1088,154 1090,166 1049,160', '#7a34c6'],
  ['1049,160 1078,160 1077,311 1052,245', '#3c8a20'],
  ['1049,160 1078,160 1078,199 1051,199', '#42722c'],
  ['1051,199 1060,199 1076,290 1072,305 1052,240', '#55b40c'],
  ['1067,162 1345,160 1375,227 1374,240 1076,240 1075,225', '#6e9d73'],
  ['1067,162 1078,162 1102,230 1075,230', '#7cab74'],
  ['1075,228 1118,228 1118,240 1075,240', '#86ae78'],
  ['1090,156 1345,150 1345,162 1090,168', '#3fa045'],
  ['1090,154 1345,150 1345,153 1100,158', '#40d044'],
  ['1345,150 1361,150 1361,163 1345,163', '#7632c4'],
  ['1345,163 1353,163 1353,228 1345,228', '#8462a8'],
  ['1353,156 1362,155 1389,227 1377,227', '#3cbc42'],
  ['1135,229 1297,227 1297,236 1135,236', '#6c7a78'],
  ['1297,227 1344,227 1344,236 1297,236', '#84a444'],
  ['1077,238 1374,236 1374,310 1077,312', '#5ab000'],
  ['1135,240 1297,239 1297,262 1135,263', '#2c8800'],
  ['1135,232 1143,232 1143,262 1135,263', '#327a30'],
  ['1288,239 1297,239 1297,262 1288,262', '#2e7840'],
  ['1344,238 1362,238 1362,310 1344,310', '#44863a'],
  ['1362,238 1374,238 1374,310 1368,290', '#40b010'],
  ['1135,263 1362,260 1362,265 1132,268', '#55b414'],
  ['1132,267 1362,264 1362,297 1132,301', '#3d9e1e'],
  ['1135,301 1166,300 1166,311 1135,312', '#2c6c00'],
  ['1166,300 1327,298 1327,304 1166,306', '#005c58'],
  ['1174,306 1288,304 1288,310 1174,311', '#004c00'],
  ['1077,240 1118,240 1118,312 1077,312', '#48b81c'],
  ['1048,565 1374,557 1375,640 1078,645', '#86b02e'],
  ['1119,561 1343,556 1343,559 1119,563', '#46cc00'],
  ['1119,614 1345,612 1350,636 1119,640', '#86822c'],
  ['1306,615 1343,615 1350,636 1308,637', '#a4a430'],
  ['1343,561 1352,561 1358,630 1345,628', '#9a8466'],
  ['1353,559 1363,559 1374,600 1374,615', '#46d000'],
  ['1362,480 1374,480 1374,576 1367,574', '#a5a600'],
  ['1044,625 1050,610 1058,636 1048,636', '#5a00c0'],
  ['1048,566 1077,645 1077,698 1052,636', '#2f6060'],
  ['1052,636 1070,636 1078,660 1076,698', '#2d8a18'],
  ['1078,646 1374,641 1374,661 1125,665 1078,665', '#237c24'],
  ['1078,665 1374,661 1374,695 1078,698', '#005c00'],
  ['1305,642 1374,641 1374,662 1305,662', '#2c8c1e'],
  ['1305,662 1374,661 1374,695 1305,696', '#2b8600'],
  ['1078,647 1125,647 1125,698 1078,698', '#30a02c'],
  ['1078,312 1088,312 1088,645 1078,645', '#c8a890', 0.6],
  ['1088,312 1106,312 1106,645 1088,645', '#c8b878', 0.35],
  ['1106,312 1118,312 1118,645 1106,645', '#d0c060', 0.5],
  ['1078,698 1118,698 1118,716 1078,716', '#a89a86'],
  ['1375,227 1388,227 1391,234 1375,234', '#6a24c2'],
  ['1375,234 1417,234 1416,712 1373,712', '#5a00b0'],
]
const lines: [string, string, number][] = [
  ['M1073 185L1150 184L1360 180M1257 162L1285 240', '#c4b83c', 2],
  ['M1095 222L1372 217M1233 162L1261 241', '#b83ab4', 2],
  ['M1135 268L1362 264', '#86c43c', 1],
  ['M1068 168L1092 240M1078 241L1374 238', '#8ac46a', 1],
  ['M1050 573L1365 567M1257 558L1288 641', '#d6dc00', 2],
  ['M1065 607L1368 602M1128 561L1158 643', '#bc6464', 2],
  ['M1048 566L1077 645L1374 640', '#b8f0a0', 1],
  ['M1383 270V308M1382 644V692M1392 640H1412', '#20a060', 1],
  ['M1174 412L1240 411L1297 410M1166 498L1240 497L1327 495', '#e0d8a0', 1],
]
</script>

<template>
  <div class="app">
    <Bar class="main-bar" :items="mainBar" />

    <div class="body">
      <aside class="nav">
        <header class="nav-title"><span>模块导航栏</span><button type="button" aria-label="固定"><Icon n="pin" /></button><button type="button" aria-label="关闭"><Icon n="close" /></button></header>
        <button type="button" class="wide">工程设置</button>
        <button type="button" class="wide">绘图输入</button>
        <div class="nav-tools"><Icon n="expandAll" /><Icon n="collapseAll" /></div>
        <ul class="tree">
          <li v-for="(n, k) in tree" :key="k" :class="{ kid: n.lv === 1, end: n.end }">
            <i class="dots"></i>
            <a href="#" :class="{ sel: n.sel }"><Icon :n="n.i" /><span>{{ n.t }}</span></a>
            <template v-if="n.t === 'CAD识别'"><Icon n="cad" /><em class="new">NEW</em></template>
          </li>
        </ul>
        <button type="button" class="wide low">单构件输入</button>
        <button type="button" class="wide">报表预览</button>
      </aside>

      <section class="side">
        <header class="title"><span>属性编辑器</span><button type="button" aria-label="固定"><Icon n="pin" /></button><button type="button" aria-label="关闭"><Icon n="close" /></button></header>
        <div class="grid-box">
          <div class="grid-clip">
            <table class="grid">
              <colgroup><col class="c-no" /><col class="c-name" /><col /></colgroup>
              <thead><tr><th></th><th>属性名称</th><th class="hot">属性值</th></tr></thead>
              <tbody>
                <tr v-for="r in props" :key="r.n" :class="{ cur: r.n === 1 }">
                  <th scope="row">{{ r.n }}</th>
                  <td :class="['name', r.c, { kid: r.kid, end: r.end }]">
                    <button v-if="r.box" type="button" class="pm">{{ r.box === '-' ? '−' : '+' }}</button>{{ r.t }}
                  </td>
                  <td class="val">
                    <i v-if="r.swatch" class="swatch"></i>
                    <template v-for="(part, k) in (r.v ?? '').split('#')" :key="k"><Icon v-if="k > 0" n="rebar" class="mark" />{{ part }}</template>
                  </td>
                </tr>
              </tbody>
            </table>
          </div>
          <div class="vbar"><Icon n="up2" /><i class="thumb"></i><Icon n="down2" /></div>
        </div>

        <div class="preview">
          <svg viewBox="0 0 42 42" aria-hidden="true">
            <rect x="4" y="4" width="29" height="30" fill="none" stroke="#0ff" stroke-width="2" />
            <path d="M1 20.500H40M20.500 2V36" stroke="#fff" stroke-dasharray="9 3 3 3" />
            <path d="M4 35V39M34 35V39M4 38H34M35 4H39M35 34H39M37.500 4V34" stroke="#ccc" stroke-dasharray="3 2" />
          </svg>
        </div>

        <header class="title"><span>构件列表</span><button type="button" aria-label="固定"><Icon n="pin" /></button><button type="button" aria-label="关闭"><Icon n="close" /></button></header>
        <div class="list-tools">
          <button type="button"><Icon n="newItem" /><span>新建</span><i class="caret"></i></button>
          <button type="button" aria-label="删除"><Icon n="del" /></button>
          <button type="button" aria-label="复制"><Icon n="copyDoc" /></button>
        </div>
        <div class="search"><input type="text" placeholder="搜索构件..." aria-label="搜索构件" /><button type="button" aria-label="搜索"><Icon n="search" /></button></div>
        <ul class="parts">
          <li><Icon n="down2" class="chev" /><Icon n="column" /><span>框柱</span></li>
          <li class="leaf"><i class="dots"></i><a href="#"><Icon n="gear" /><span>KZ-1</span></a></li>
        </ul>
      </section>

      <main class="work">
        <div class="bars">
          <div class="bar-row"><Bar :items="editBar" /></div>
          <div class="bar-row spaced"><Bar :items="partBar" /><Bar :items="axisBar" /></div>
          <div class="bar-row"><Bar :items="drawBar" /><Bar class="stub" :items="[grip]" /></div>
        </div>

        <div class="view">
          <svg class="scene" viewBox="512 104 1389 641" preserveAspectRatio="xMidYMid slice">
            <g fill="none" stroke="#7c0a12">
              <ellipse v-for="(e, k) in ellipses" :key="k" :cx="e[0]" :cy="e[1]" rx="54" ry="12" />
              <path v-for="a in axes" :key="a" :d="a" />
            </g>
            <polygon v-for="(q, k) in polys" :key="k" :points="q[0]" :fill="q[1]" :opacity="q[2] ?? 1" />
            <path v-for="(l, k) in lines" :key="k" :d="l[0]" :stroke="l[1]" :stroke-width="l[2]" fill="none" />
            <g fill="none">
              <path d="M1087 285V560" stroke="#8a5840" stroke-width="5" stroke-dasharray="3 1 9 2 2 3" />
              <path d="M1096 240V562" stroke="#52dc70" stroke-width="5" opacity=".8" />
              <path d="M1106 245V645M1112 320V645" stroke="#a09a60" stroke-dasharray="2 3" opacity=".8" />
              <path d="M1082 320V645M1106 320V645" stroke="#c8bca0" stroke-width="20" stroke-dasharray="1 9" opacity=".3" />
              <path d="M1080 566V745M1096 566V745M1110 566V745M1079 702H1118M1079 724H1112M1079 741H1112M1079 655H1118M1079 664H1118M1079 673H1118M1079 682H1118M1079 691H1118" stroke="#a89a86" stroke-width="2" opacity=".7" />
              <path d="M1074 234V709H1116M1115 240V709" stroke="#e8e0c0" />
              <path d="M1077 232V716H1118V240" stroke="#fff" stroke-width="2" />
              <path d="M1075 232H1118M1077 239H1118" stroke="#c8d8c0" />
            </g>
            <g fill="none" stroke="#7c0a12">
              <path d="M1416 641L1448 729M1104 713L1440 708M1055 646H1078L1109 734" />
              <ellipse cx="1452" cy="742" rx="54" ry="13" /><ellipse cx="1114" cy="747" rx="54" ry="13" />
            </g>
            <g class="num">
              <text x="1089" y="216" fill="#a080a4">216</text>
              <text x="1092" y="245" fill="#1c5c1c">(550-20+12*d)</text>
              <text x="1116" y="408" fill="#a0a0a0">2442</text>
              <text x="1116" y="466" fill="#3f6410">3600-1138-550+550-20+12*d</text>
            </g>
            <text class="formula" x="1116" y="438"><tspan fill="#3f6410">层高-本层的露出长度-节点高+</tspan><tspan fill="#14cc14">节点高-保护层+节点设置中的柱纵筋顶层弯折</tspan></text>
            <ellipse cx="1234" cy="420" rx="82" ry="33" fill="none" stroke="#f5261a" stroke-width="3" />
            <path d="M567 696V656" stroke="#0a84ff" stroke-width="4" /><path d="M562 660L567 647L572 660Z" fill="#0a84ff" />
            <path d="M567 696H606" stroke="#f00" stroke-width="4" /><path d="M604 691L617 695.500L604 700Z" fill="#f00" />
            <path d="M563 689L568 697" stroke="#30e060" stroke-width="3" />
            <g class="axis"><text x="553" y="652" fill="#4a90ff">Z</text><text x="573" y="691" fill="#60d060">Y</text><text x="602" y="696" fill="#f02020">X</text></g>
          </svg>
          <div class="float">
            <h2>钢筋显示控制面板</h2>
            <div class="checks">
              <label v-for="s in shows" :key="s.t"><input v-model="s.on" type="checkbox" />{{ s.t }}</label>
            </div>
          </div>
        </div>

        <div class="bar-row snap"><Bar v-for="(s, k) in snapBars" :key="k" :items="s" /></div>

        <div class="dock">
          <div class="handle"><Icon n="close" /></div>
          <div class="dock-main">
            <Bar class="rebar-bar" :items="rebarBar" />
            <div class="table-box">
              <div class="table-clip">
                <table class="bars-table">
                  <colgroup><col v-for="(t, k) in heads" :key="k" :class="'k' + k" /></colgroup>
                  <thead><tr><th v-for="t in heads" :key="t" :class="{ hot: t === '公式描述' }">{{ t }}</th></tr></thead>
                  <tbody>
                    <tr v-for="(r, k) in bars" :key="r.n" :class="{ cur: k === 0 }">
                      <th scope="row">{{ r.n }}</th>
                      <td class="fix">{{ r.name }}</td>
                      <td class="n">18</td>
                      <td class="mid"><Icon n="rebar" class="mark" /></td>
                      <td class="n">18</td>
                      <td class="shape">
                        <div><span>216</span><b>{{ r.len }}</b></div>
                      </td>
                      <td class="n">{{ r.fx }}</td>
                      <td class="desc">{{ desc }}</td>
                      <td v-for="(v, j) in r.rest" :key="j" class="n">{{ v }}</td>
                      <td>直筋</td>
                      <td>电渣压力焊</td>
                      <td>普通钢筋</td>
                    </tr>
                  </tbody>
                </table>
                <svg class="ring" viewBox="0 0 104 40" aria-hidden="true"><ellipse cx="52" cy="20" rx="49" ry="17" fill="none" stroke="#f5261a" stroke-width="3" /></svg>
              </div>
              <div class="vbar"><Icon n="up2" /><i class="thumb short"></i><Icon n="down2" /></div>
              <div class="hbar"><Icon n="left2" /><i></i><Icon n="right2" /></div>
            </div>
          </div>
        </div>
      </main>
    </div>

    <footer class="status">
      <span class="s1">94727 Y=35965</span><span class="s2">层高:3m</span><span class="s3">底标高:-0.06m</span><span class="s4">1(4)</span><span class="s5"></span><span class="s6">240.1 FPS</span>
    </footer>
  </div>
</template>

<style>
html, body { background: #f0f0f0; }
button, input, select { font: inherit; color: inherit; margin: 0; }
button { border: 0; background: none; padding: 0; }
.ic { width: 16px; height: 16px; flex: none; display: block; }
.bar { display: flex; align-items: center; gap: 1px; height: 25px; padding: 0 4px 0 5px; background: linear-gradient(#fcfcfc, #f4f4f4); font: 12px/16px "Noto Sans CJK SC", sans-serif; color: #000; white-space: nowrap; flex: none; box-sizing: border-box; }
.bar .btn { display: flex; align-items: center; gap: 4px; height: 23px; padding: 0 3px; flex: none; }
.bar .btn.on { margin-right: -1px; padding: 0 2px; border: 1px solid #1a74bd; background: #dcebf8; }
.bar .btn.on + .btn { margin-left: 1px; }
.bar .off { color: #777; }
.bar .btn.off .ic { filter: grayscale(1); opacity: .6; }
.caret { width: 8px; height: 4px; background: currentColor; clip-path: polygon(12% 0, 88% 0, 50% 100%); flex: none; }
.caret.near { margin-left: -4px; }
.bar .sep { width: 1px; height: 18px; margin: 0 2px; background: #b4b4b4; flex: none; }
.bar .grip { width: 3px; height: 18px; background: repeating-linear-gradient(#aaa 0 2px, transparent 2px 4px) center / 2px 100% no-repeat; flex: none; }
.bar .combo { appearance: none; height: 23px; padding: 0 14px 0 2px; border: 0; border-radius: 0; color: #000; opacity: 1; background: linear-gradient(45deg, transparent 50%, #000 50%) right 7px center / 3px 3px no-repeat, linear-gradient(-45deg, transparent 50%, #000 50%) right 4px center / 3px 3px no-repeat, #fff; }
.bar .combo.boxed { border: 1px solid #777; color: #666; background-color: #f2f2f2; }
.bar .spin { display: flex; align-items: center; height: 23px; border: 1px solid #777; box-sizing: border-box; background: #f5f5f5; }
.bar .spin input { width: 100%; min-width: 0; flex: 1; border: 0; padding: 0 8px 0 0; text-align: right; background: none; color: #777; }
.bar .spin .ic { width: 14px; height: 20px; }
.bar .lbl { padding: 0 2px; }
.bar .tick { display: flex; align-items: center; gap: 8px; }
.bar .tick input, .checks input { appearance: none; width: 11px; height: 11px; border: 1px solid #888; background: #fff; box-sizing: border-box; flex: none; }
.checks input:checked::after { content: ""; display: block; width: 5px; height: 2px; margin: 2px 0 0 1px; border: solid #333; border-width: 0 0 1px 1px; transform: rotate(-45deg); }
</style>

<style scoped>
.app { height: 100vh; display: flex; flex-direction: column; overflow: hidden; background: #f0f0f0; color: #000; font: 12px/16px "Liberation Serif", "Noto Sans CJK SC", serif; box-sizing: border-box; }
.main-bar { margin-top: -8px; align-self: flex-start; padding-left: 6px; }
.body { flex: 1; min-height: 0; display: flex; padding-top: 5px; }
a { color: inherit; text-decoration: none; }
ul { list-style: none; margin: 0; padding: 0; }

/* navigation */
.nav { width: 216px; margin-left: -20px; flex: none; display: flex; flex-direction: column; padding-bottom: 4px; box-sizing: border-box; }
.nav-title, .title { display: flex; align-items: center; height: 15px; flex: none; }
.nav-title { background: #0052e0; color: #fff; padding-left: 3px; margin-bottom: 2px; }
.nav-title span, .title span { flex: 1; }
.nav-title .ic, .title .ic { width: 10px; height: 10px; margin: 0 4px; }
.wide { height: 22px; flex: none; border-bottom: 1px solid #999; border-right: 1px solid #999; background: #f0f0f0; text-align: center; }
.wide.low { border-top: 1px solid #999; }
.nav-tools { display: flex; align-items: center; height: 27px; flex: none; padding-left: 20px; background: linear-gradient(#f4f4f4, #fff); border-right: 1px solid #aaa; }
.nav-tools .ic:first-child { width: 12px; }
.tree { flex: 1; min-height: 0; overflow: hidden; background: #fff; border: 1px solid #888; border-right-width: 2px; padding: 1px 0 0 22px; margin-bottom: 1px; }
.tree li { display: flex; align-items: center; height: 16px; white-space: nowrap; }
.tree .dots { width: 4px; border-top: 1px dotted #888; flex: none; }
.tree a { display: flex; align-items: center; gap: 5px; height: 16px; }
.tree li > .ic { margin-left: 6px; }
.tree .kid { padding-left: 12px; }
.tree .kid .dots { width: 10px; height: 16px; border: 0; background: repeating-linear-gradient(90deg, #888 0 1px, transparent 1px 2px) 0 8px / 100% 1px no-repeat, repeating-linear-gradient(#888 0 1px, transparent 1px 2px) 0 0 / 1px 100% no-repeat; }
.tree .kid.end .dots { background-size: 100% 1px, 1px 8px; }
.tree .kid a { gap: 4px; padding: 0 5px 0 1px; }
.tree .sel { background: #d9d9d9; }
.new { font: 700 9px/10px "Liberation Sans", sans-serif; background: #ffe93a; margin: 0 0 5px 2px; }

/* side panels */
.side { width: 307px; margin-left: 5px; flex: none; display: flex; flex-direction: column; padding-bottom: 4px; }
.title { border: 1px solid #8a8a8a; box-sizing: border-box; font-size: 13px; }
.grid-box { flex: 632 1 0; min-height: 0; display: flex; border: 1px solid #999; background: #fff; margin: 1px 0 4px; padding: 1px; box-sizing: border-box; overflow: hidden; }
.grid-clip { flex: 1; overflow: hidden; }
.grid { width: 100%; table-layout: fixed; border-collapse: collapse; }
.c-no { width: 21px; }
.c-name { width: 121px; }
.grid th, .grid td { height: 19px; padding: 0; box-sizing: border-box; border: solid #b4b4b4; border-width: 0 1px 1px 0; font-weight: 400; white-space: nowrap; overflow: hidden; }
.grid thead th { height: 23px; background: linear-gradient(#fff, #eee); }
.grid thead .hot, .bars-table thead .hot { background: linear-gradient(#f8dca0, #efbf62); color: #6b0020; }
.grid tbody th { font: 11px/16px "Liberation Sans", sans-serif; background: linear-gradient(90deg, #fff, #eee); }
.grid .cur th { background: #ffcf87; color: #6b0020; }
.grid .name { padding-left: 20px; }
.grid .kid { padding-left: 30px; background: linear-gradient(#aaa, #aaa) 8px 0 / 1px 100% no-repeat, linear-gradient(#aaa, #aaa) 8px 9px / 17px 1px no-repeat; }
.grid .kid.end { background-size: 1px 9px, 17px 1px; }
.grid .blue { color: #0000d8; }
.grid .gray { color: #808080; }
.grid .val { color: #808080; padding-left: 3px; }
.grid .cur .name { background: #0078d7; color: #fff; }
.grid .cur .val { background: #d6e9f8; }
.pm { width: 13px; height: 13px; margin: 0 5px 0 -18px; border: 1px solid #999; background: #fff; line-height: 10px; box-sizing: border-box; vertical-align: middle; color: #000; }
.mark { display: inline-block; width: 10px; height: 10px; margin: 0 1px; vertical-align: -1px; }
.swatch { display: block; height: 13px; margin: 0 5px 0 1px; border: 1px solid #000; background: #8000ff; box-sizing: border-box; }
.vbar { width: 17px; flex: none; display: flex; flex-direction: column; align-items: center; background: #f0f0f0; }
.vbar .ic { width: 12px; height: 16px; margin: auto 0 0; }
.vbar .ic:first-child { margin: 0; }
.vbar .thumb { width: 15px; flex: 0 0 88%; background: #cdcdcd; }
.preview { height: 42px; flex: none; background: #000; display: flex; justify-content: center; margin-bottom: 7px; }
.preview svg { width: 42px; height: 42px; }
.list-tools { display: flex; align-items: center; gap: 8px; height: 28px; flex: none; padding: 0 0 2px 4px; background: linear-gradient(#f4f4f4, #fdfdfd); box-sizing: border-box; }
.list-tools button { display: flex; align-items: center; gap: 4px; }
.list-tools .caret { width: 7px; margin-left: -1px; }
.search { display: flex; height: 24px; flex: none; margin-bottom: 1px; }
.search input { flex: 1; border: 1px solid #777; padding: 0 3px 4px; background: #fff; box-sizing: border-box; }
.search input::placeholder { color: #888; }
.search button { width: 25px; padding-left: 4px; }
.parts { flex: 165 1 0; min-height: 0; border: 1px solid #888; background: #fff; padding-top: 2px; }
.parts li { display: flex; align-items: center; height: 16px; padding-left: 6px; }
.parts span { margin-left: 4px; }
.parts .chev { width: 12px; margin-right: 6px; }
.parts .leaf { padding-left: 30px; }
.parts .dots { width: 10px; height: 8px; margin-bottom: 8px; border: dotted #888; border-width: 0 0 1px 1px; box-sizing: border-box; }
.parts a { display: flex; align-items: center; height: 16px; padding: 0 5px 0 1px; background: #2a62c4; }
.parts a span { margin-left: 5px; }

/* work area */
.work { flex: 1; min-width: 0; margin-left: 2px; display: flex; flex-direction: column; padding-bottom: 4px; }
.bars { display: grid; gap: 3px; padding-bottom: 1px; flex: none; }
.bar-row { display: flex; overflow: hidden; }
.spaced { gap: 69px; }
.stub { width: 34px; }
.view { flex: 1; min-height: 0; position: relative; background: #000; margin-left: 2px; overflow: hidden; }
.scene { display: block; width: 100%; height: 100%; }
.num { font: 15px "DejaVu Sans Mono", monospace; }
.formula { font: 19px "Noto Sans CJK SC", sans-serif; }
.axis { font: 14px "Noto Sans", sans-serif; }
.float { position: absolute; left: 9px; top: 4px; width: 167px; height: 179px; background: #fff; border: 1px solid #777; box-sizing: border-box; display: flex; flex-direction: column; }
.float h2 { margin: 0; padding: 0 7px; font: 12px/30px "Noto Sans CJK SC", sans-serif; color: #999; }
.checks { flex: 1; border: 1px solid #888; margin: 0 1px 1px; padding: 2px 0 0 3px; }
.checks label { display: flex; align-items: center; gap: 3px; height: 12px; }
.snap { flex: none; padding: 2px 0 8px; }
.dock { display: flex; flex: none; }
.handle { width: 11px; margin: 0 2px 0 1px; flex: none; background: radial-gradient(circle, #aaa 1px, transparent 1px) 0 14px / 4px 4px; }
.handle .ic { width: 10px; height: 10px; background: #f0f0f0; color: #844; }
.dock-main { flex: 1; min-width: 0; }
.rebar-bar { padding-left: 1px; padding-bottom: 2px; }
.table-box { display: grid; grid-template-columns: 1fr 17px; border: 1px solid #999; margin-right: 2px; background: #f0f0f0; padding: 0 0 1px; }
.table-clip { height: 133px; position: relative; overflow: hidden; background: #fff; }
.bars-table { width: 100%; table-layout: fixed; border-collapse: collapse; }
.k0 { width: 33px } .k1 { width: 72px } .k2 { width: 57px } .k3 { width: 36px } .k4 { width: 33px } .k5 { width: 201px } .k6 { width: 166px } .k7 { width: 199px } .k8 { width: 81px }
.k9 { width: 62px } .k10 { width: 38px } .k11 { width: 39px } .k12 { width: 49px } .k13 { width: 61px } .k14 { width: 61px } .k15 { width: 71px } .k16 { width: 74px }
.bars-table th, .bars-table td { padding: 0 2px; border: solid #aab8ac; border-width: 0 1px 1px 0; font-weight: 400; white-space: nowrap; overflow: hidden; box-sizing: border-box; }
.bars-table thead th { height: 19px; padding: 0; background: linear-gradient(#fff, #eee); border-color: #bbb; text-align: center; }
.bars-table thead th:last-child { text-align: left; padding-left: 10px; }
.bars-table tbody tr { height: 41px; }
.bars-table td { background: #ccffdc; }
.bars-table tbody th { background: linear-gradient(90deg, #fff, #eee); font: 11px/16px "Liberation Sans", sans-serif; }
.bars-table .cur th { background: #ffd08a; color: #6b0020; }
.bars-table .fix { border-right: 1px solid #000; }
.bars-table .n { font: 11px/16px "Liberation Sans", sans-serif; }
.bars-table .mid { text-align: center; }
.bars-table .desc { white-space: pre; line-height: 12px; }
.bars-table .cur .desc { background: #a8e8d8; outline: 1px dotted #222; outline-offset: -1px; }
.shape div { display: flex; align-items: flex-end; font: 11px/12px "Liberation Sans", sans-serif; padding-left: 8px; }
.shape span { width: 23px; }
.shape b { width: 138px; height: 15px; padding: 0 0 3px 50px; box-sizing: border-box; border: solid #000; border-width: 0 0 2px 2px; color: #e00000; font-weight: 400; line-height: 6px; }
.ring { position: absolute; left: 615px; top: 0; width: 104px; height: 40px; }
.table-box .vbar .short { flex: 0 0 19px; }
.hbar { grid-column: 1 / -1; display: flex; align-items: center; height: 16px; }
.hbar .ic { width: 17px; height: 12px; }
.hbar i { width: 75%; height: 16px; background: #cdcdcd; margin-right: auto; }
.hbar .ic:last-child { margin-right: 18px; }

/* status */
.status { display: flex; gap: 3px; height: 12px; flex: none; overflow: hidden; border-top: 1px solid #bbb; box-sizing: border-box; background: #fafafa; line-height: 16px; white-space: nowrap; }
.status span { border-right: 1px solid #bbb; padding-left: 1px; box-sizing: border-box; height: 20px; flex: none; }
.status .s1 { width: 129px } .status .s2 { width: 77px } .status .s3 { width: 97px } .status .s4 { width: 47px } .status .s5 { flex: 1 } .status .s6 { width: 72px }
</style>
